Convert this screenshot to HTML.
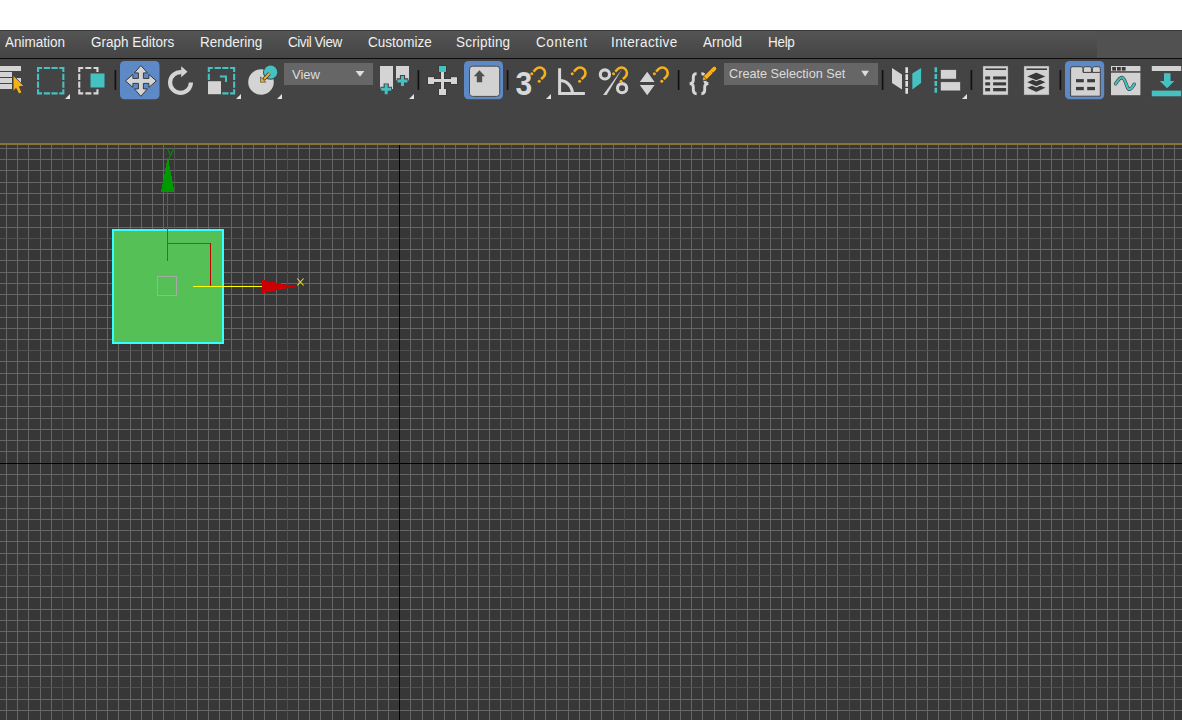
<!DOCTYPE html>
<html><head><meta charset="utf-8">
<style>
html,body{margin:0;padding:0;}
body{width:1182px;height:720px;overflow:hidden;background:#fff;position:relative;font-family:"Liberation Sans",sans-serif;}
#menubar{position:absolute;left:0;top:30px;width:1182px;height:27px;background:linear-gradient(#555 0%,#4c4c4c 50%,#454545 100%);border-top:1px solid #383838;}
#menuright{position:absolute;left:1097px;top:31px;width:85px;height:27px;background:#515151;}
#menuline{position:absolute;left:0;top:58px;width:1182px;height:1px;background:#0c0c0c;}
.mi{position:absolute;top:34px;font-size:13.5px;line-height:16px;color:#f0f0f0;white-space:nowrap;transform:scaleY(1.1);transform-origin:0 3px;}
#toolbar{position:absolute;left:0;top:59px;width:1182px;height:84px;background:#444444;}
#ybar{position:absolute;left:0;top:143px;width:1182px;height:2px;background:#8a7432;}
#vp{position:absolute;left:0;top:145px;width:1182px;height:575px;background:#373737;}
svg{position:absolute;left:0;top:0;}
.dd{position:absolute;height:22px;top:63px;background:#666666;}
.ddt{position:absolute;top:67px;font-size:13px;line-height:14px;color:#dcdcdc;white-space:nowrap;}
</style></head><body>
<div id="menubar"></div><div id="menuright"></div><div id="menuline"></div>
<div class="mi" style="left:5px">Animation</div>
<div class="mi" style="left:91px">Graph Editors</div>
<div class="mi" style="left:200px">Rendering</div>
<div class="mi" style="left:288px;letter-spacing:-0.45px">Civil View</div>
<div class="mi" style="left:368px">Customize</div>
<div class="mi" style="left:456px;letter-spacing:0.2px">Scripting</div>
<div class="mi" style="left:536px;letter-spacing:0.6px">Content</div>
<div class="mi" style="left:611px;letter-spacing:0.4px">Interactive</div>
<div class="mi" style="left:703px">Arnold</div>
<div class="mi" style="left:768px;letter-spacing:-0.3px">Help</div>
<div id="toolbar"></div>
<div id="ybar"></div>
<div id="vp"></div>
<svg width="1182" height="720" viewBox="0 0 1182 720">
<path d="M6 145h1V720h-1zM17 145h1V720h-1zM28 145h1V720h-1zM40 145h1V720h-1zM51 145h1V720h-1zM73 145h1V720h-1zM85 145h1V720h-1zM96 145h1V720h-1zM107 145h1V720h-1zM118 145h1V720h-1zM130 145h1V720h-1zM141 145h1V720h-1zM152 145h1V720h-1zM163 145h1V720h-1zM186 145h1V720h-1zM197 145h1V720h-1zM208 145h1V720h-1zM219 145h1V720h-1zM231 145h1V720h-1zM242 145h1V720h-1zM253 145h1V720h-1zM264 145h1V720h-1zM276 145h1V720h-1zM298 145h1V720h-1zM309 145h1V720h-1zM320 145h1V720h-1zM332 145h1V720h-1zM343 145h1V720h-1zM354 145h1V720h-1zM365 145h1V720h-1zM377 145h1V720h-1zM388 145h1V720h-1zM410 145h1V720h-1zM422 145h1V720h-1zM433 145h1V720h-1zM444 145h1V720h-1zM455 145h1V720h-1zM467 145h1V720h-1zM478 145h1V720h-1zM489 145h1V720h-1zM500 145h1V720h-1zM523 145h1V720h-1zM534 145h1V720h-1zM545 145h1V720h-1zM556 145h1V720h-1zM568 145h1V720h-1zM579 145h1V720h-1zM590 145h1V720h-1zM601 145h1V720h-1zM613 145h1V720h-1zM635 145h1V720h-1zM646 145h1V720h-1zM658 145h1V720h-1zM669 145h1V720h-1zM680 145h1V720h-1zM691 145h1V720h-1zM702 145h1V720h-1zM714 145h1V720h-1zM725 145h1V720h-1zM747 145h1V720h-1zM759 145h1V720h-1zM770 145h1V720h-1zM781 145h1V720h-1zM792 145h1V720h-1zM804 145h1V720h-1zM815 145h1V720h-1zM826 145h1V720h-1zM837 145h1V720h-1zM860 145h1V720h-1zM871 145h1V720h-1zM882 145h1V720h-1zM893 145h1V720h-1zM905 145h1V720h-1zM916 145h1V720h-1zM927 145h1V720h-1zM938 145h1V720h-1zM950 145h1V720h-1zM972 145h1V720h-1zM983 145h1V720h-1zM995 145h1V720h-1zM1006 145h1V720h-1zM1017 145h1V720h-1zM1028 145h1V720h-1zM1040 145h1V720h-1zM1051 145h1V720h-1zM1062 145h1V720h-1zM1084 145h1V720h-1zM1096 145h1V720h-1zM1107 145h1V720h-1zM1118 145h1V720h-1zM1129 145h1V720h-1zM1141 145h1V720h-1zM1152 145h1V720h-1zM1163 145h1V720h-1zM1174 145h1V720h-1zM0 148H1182v1H0zM0 159H1182v1H0zM0 170H1182v1H0zM0 182H1182v1H0zM0 193H1182v1H0zM0 204H1182v1H0zM0 215H1182v1H0zM0 227H1182v1H0zM0 249H1182v1H0zM0 260H1182v1H0zM0 272H1182v1H0zM0 283H1182v1H0zM0 294H1182v1H0zM0 305H1182v1H0zM0 317H1182v1H0zM0 328H1182v1H0zM0 339H1182v1H0zM0 361H1182v1H0zM0 373H1182v1H0zM0 384H1182v1H0zM0 395H1182v1H0zM0 406H1182v1H0zM0 418H1182v1H0zM0 429H1182v1H0zM0 440H1182v1H0zM0 451H1182v1H0zM0 474H1182v1H0zM0 485H1182v1H0zM0 496H1182v1H0zM0 508H1182v1H0zM0 519H1182v1H0zM0 530H1182v1H0zM0 541H1182v1H0zM0 553H1182v1H0zM0 564H1182v1H0zM0 586H1182v1H0zM0 597H1182v1H0zM0 609H1182v1H0zM0 620H1182v1H0zM0 631H1182v1H0zM0 642H1182v1H0zM0 654H1182v1H0zM0 665H1182v1H0zM0 676H1182v1H0zM0 699H1182v1H0zM0 710H1182v1H0z" fill="#666666" shape-rendering="crispEdges"/>
<path d="M62 145h1V720h-1zM174 145h1V720h-1zM287 145h1V720h-1zM511 145h1V720h-1zM624 145h1V720h-1zM736 145h1V720h-1zM849 145h1V720h-1zM961 145h1V720h-1zM1073 145h1V720h-1zM0 238H1182v1H0zM0 350H1182v1H0zM0 575H1182v1H0zM0 687H1182v1H0z" fill="#505050" shape-rendering="crispEdges"/>
<rect x="399" y="145" width="1" height="575" fill="#000"/>
<rect x="0" y="463" width="1182" height="1" fill="#000"/>
</svg>
<div class="dd" style="left:284px;width:89px"></div>
<div class="ddt" style="left:292px;top:68px;transform:scaleY(1.05);transform-origin:0 2px">View</div>
<div class="dd" style="left:724px;width:154px"></div>
<div class="ddt" style="left:729px;font-size:12.7px">Create Selection Set</div>
<svg id="gz" width="1182" height="720" viewBox="0 0 1182 720">
<rect x="112" y="229" width="112" height="115" fill="#55c055"/>
<rect x="113" y="230" width="110" height="113" fill="none" stroke="#33ffff" stroke-width="2"/>
<rect x="157.5" y="276.5" width="19" height="19" fill="none" stroke="#a8a8a8" stroke-width="1"/>
<g shape-rendering="crispEdges">
<rect x="167" y="191" width="1" height="70" fill="#009900"/>
<rect x="167" y="243" width="44" height="1" fill="#009900"/>
<rect x="210" y="243" width="1" height="43" fill="#bb0000"/>
<rect x="193" y="286" width="70" height="1" fill="#ffff00"/>
</g>
<path d="M161 192H174.5L167.8 156.5Z" fill="#009900" shape-rendering="crispEdges"/>
<path d="M262 280V293L296.5 286.5Z" fill="#cc0000" shape-rendering="crispEdges"/>
<path d="M167.2 148L170.8 156M174 148L168.6 159.5" stroke="#009900" stroke-width="1" fill="none"/>
<path d="M297.2 278.5L303.6 285.5M303.6 278.5L297.2 285.5" stroke="#e8e020" stroke-width="1.1" fill="none"/>
</svg>

<svg id="tb" width="1182" height="145" viewBox="0 0 1182 145">
<g fill="#d4d4d4">
<!-- select by name -->
<rect x="0" y="66" width="21" height="5"/>
<rect x="0" y="72" width="12" height="5"/>
<rect x="0" y="78" width="12" height="5"/>
<rect x="17" y="78" width="4" height="5"/>
<rect x="0" y="84" width="12" height="5"/>
</g>
<path d="M13.1 75.3V91.3L16.1 88.4L18.8 94L21.9 92.6L19.4 86.7L24 86.1Z" fill="#f6b11a" stroke="#3a3a3a" stroke-width="0.8" stroke-linejoin="round"/>
<!-- rect select -->
<path d="M38.05 72.00V68.05H42.00M59.30 68.05H63.35V72.00M63.35 89.30V93.35H59.30M42.00 93.35H38.05V89.30M43.80 68.05H50.10M43.80 93.35H50.10M51.40 68.05H57.70M51.40 93.35H57.70M38.05 73.80V80.10M63.35 73.80V80.10M38.05 81.40V87.70M63.35 81.40V87.70" fill="none" stroke="#45c1c1" stroke-width="2.1" stroke-linejoin="miter"/>
<path d="M65 99H70V94Z" fill="#e2e2e2"/>
<!-- window crossing -->
<path d="M79.25 72.00V68.05H83.20M93.50 68.05H97.45V72.00M97.45 89.30V93.35H93.50M83.20 93.35H79.25V89.30M85.40 68.05H91.30M85.40 93.35H91.30M79.25 73.80V80.10M97.45 73.80V80.10M79.25 81.40V87.70M97.45 81.40V87.70" fill="none" stroke="#d8d8d8" stroke-width="2.1" stroke-linejoin="miter"/>
<rect x="89.4" y="72.5" width="16" height="16" fill="#444"/>
<rect x="90.5" y="73.5" width="14" height="14" fill="#45c1c1"/>
<!-- separators -->
<g fill="#111">
<rect x="114.6" y="70" width="1.6" height="20"/>
<rect x="417.6" y="70" width="1.6" height="20"/>
<rect x="506.8" y="70" width="1.6" height="20"/>
<rect x="677.8" y="70" width="1.6" height="20"/>
<rect x="881.8" y="70" width="1.6" height="20"/>
<rect x="970.6" y="70" width="1.6" height="20"/>
<rect x="1059.6" y="70" width="1.6" height="20"/>
</g>
<!-- blue buttons -->
<g fill="#5d8ac6">
<rect x="120" y="61" width="39.5" height="38.2" rx="4.5"/>
<rect x="464" y="61" width="39" height="38.2" rx="4.5"/>
<rect x="1065" y="61" width="39.2" height="38.2" rx="4.5"/>
</g>
<!-- move -->
<path d="M140.90 65.50L147.40 72.90L143.40 72.90L143.40 78.40L148.90 78.40L148.90 74.40L156.30 80.90L148.90 87.40L148.90 83.40L143.40 83.40L143.40 88.90L147.40 88.90L140.90 96.30L134.40 88.90L138.40 88.90L138.40 83.40L132.90 83.40L132.90 87.40L125.50 80.90L132.90 74.40L132.90 78.40L138.40 78.40L138.40 72.90L134.40 72.90Z" fill="#d4d4d4" stroke="#383838" stroke-width="1" stroke-linejoin="miter"/>
<!-- rotate -->
<path d="M190.9 82.5A10.4 10.4 0 1 1 181.5 72.1" fill="none" stroke="#d4d4d4" stroke-width="4.2"/>
<path d="M181.2 66.2L187.5 71.8L181.2 77.2Z" fill="#d4d4d4"/>
<!-- scale -->
<path d="M208.85 72.00V68.05H212.80M230.10 68.05H234.15V72.00M234.15 89.30V93.35H230.10M212.80 93.35H208.85V89.30M214.60 68.05H220.90M214.60 93.35H220.90M222.20 68.05H228.50M222.20 93.35H228.50M208.85 73.80V80.10M234.15 73.80V80.10M208.85 81.40V87.70M234.15 81.40V87.70" fill="none" stroke="#45c1c1" stroke-width="2.1" stroke-linejoin="miter"/>
<rect x="207" y="80" width="15" height="15" fill="#444"/>
<rect x="208" y="81.2" width="13" height="13" fill="#d4d4d4"/>
<path d="M219.8 76.4H226V82" fill="none" stroke="#45c1c1" stroke-width="2"/>
<path d="M236 99H241V94Z" fill="#e2e2e2"/>
<!-- pivot -->
<circle cx="261" cy="82" r="12.8" fill="#d4d4d4"/>
<circle cx="270.6" cy="72.2" r="7.6" fill="#444"/>
<circle cx="270.6" cy="72.2" r="6.6" fill="#45c1c1"/>
<path d="M269.5 73.5L263.5 79.5" stroke="#3a3a3a" stroke-width="3.6"/>
<path d="M269.5 73.5L264 79" stroke="#f6b11a" stroke-width="2"/>
<path d="M260.5 82.2V76.8L265.8 82.2Z" fill="#f6b11a" stroke="#3a3a3a" stroke-width="0.6"/>
<path d="M277 99H282V94Z" fill="#e2e2e2"/>
<!-- view dropdown triangle -->
<path d="M355.6 71H364.4L360 76.8Z" fill="#dedede"/>
<!-- named selection -->
<path d="M380 66H393V89H380Z" fill="#d4d4d4"/>
<path d="M396 66H409V80.4H396Z" fill="#d4d4d4"/>
<path d="M386.2 83.5V95.2M380.4 89.3H392" stroke="#444" stroke-width="5.2"/>
<path d="M386.2 84.3V94.3M381.2 89.3H391.2" stroke="#45c1c1" stroke-width="3"/>
<path d="M402.5 75.1V86.8M396.7 80.9H408.3" stroke="#444" stroke-width="5.2"/>
<path d="M402.5 75.9V85.9M397.5 80.9H407.5" stroke="#45c1c1" stroke-width="3"/>
<path d="M409 99H414V94Z" fill="#e2e2e2"/>
<!-- placement -->
<g fill="#d6d6d6" stroke="#353535" stroke-width="1.2">
<rect x="441" y="72" width="3" height="18"/><rect x="434" y="79" width="17" height="3"/>
<rect x="428" y="77.2" width="6" height="6.8"/><rect x="451" y="77.2" width="6" height="6.8"/><rect x="439" y="89" width="7" height="6"/>
<rect x="439" y="66" width="7" height="6" fill="#45c1c1"/>
</g>
<g fill="#d6d6d6">
<rect x="441" y="72" width="3" height="18"/><rect x="434" y="79" width="17" height="3"/>
<rect x="428" y="77.2" width="6" height="6.8"/><rect x="451" y="77.2" width="6" height="6.8"/><rect x="439" y="89" width="7" height="6"/>
<rect x="439" y="66" width="7" height="6" fill="#45c1c1"/>
</g>
<!-- select manipulate -->
<rect x="469.5" y="66.2" width="30.2" height="30.2" rx="3" fill="#d2d2d2" stroke="#4c4c4c" stroke-width="1"/>
<path d="M473.8 76.3L479.4 70.2L485 76.3H482.2V82.2H476.8V76.3Z" fill="#505050"/>
<!-- snaps -->
<text transform="translate(515.6 95.2) scale(1 1.11)" font-family="Liberation Sans" font-weight="bold" font-size="30" fill="#d8d8d8">3</text>
<g fill="none" stroke="#f6b11a" stroke-width="2.6">
<path d="M533.5 71.55L535.88 69.18A5.4 5.4 0 0 1 543.52 76.82L541.15 79.2"/><circle cx="531.8" cy="73.7" r="1.5" fill="#f6b11a" stroke="none"/><circle cx="539.2" cy="81.2" r="1.5" fill="#f6b11a" stroke="none"/>
</g>
<path d="M546 99H551V94Z" fill="#e2e2e2"/>
<!-- angle snap -->
<path d="M559.6 68.2V93.4H584.9" fill="none" stroke="#d6d6d6" stroke-width="3"/>
<path d="M559.6 80.6A12.8 12.8 0 0 1 572.4 93.4" fill="none" stroke="#d6d6d6" stroke-width="3"/>
<g transform="translate(40.4 0)" fill="none" stroke="#f6b11a" stroke-width="2.6"><path d="M533.5 71.55L535.88 69.18A5.4 5.4 0 0 1 543.52 76.82L541.15 79.2"/><circle cx="531.8" cy="73.7" r="1.5" fill="#f6b11a" stroke="none"/><circle cx="539.2" cy="81.2" r="1.5" fill="#f6b11a" stroke="none"/></g>
<!-- percent -->
<circle cx="604.9" cy="74.45" r="4.6" fill="none" stroke="#d4d4d4" stroke-width="3.1"/>
<circle cx="622.1" cy="88.2" r="4.6" fill="none" stroke="#d4d4d4" stroke-width="3.1"/>
<path d="M603.1 94.9H606.6L622.2 68.8Z" fill="#d4d4d4"/>
<g transform="translate(81.8 0)" fill="none" stroke="#f6b11a" stroke-width="2.6"><path d="M533.5 71.55L535.88 69.18A5.4 5.4 0 0 1 543.52 76.82L541.15 79.2"/><circle cx="531.8" cy="73.7" r="1.5" fill="#f6b11a" stroke="none"/><circle cx="539.2" cy="81.2" r="1.5" fill="#f6b11a" stroke="none"/></g>
<!-- spinner -->
<path d="M639.8 82H654.6L647.2 71.7Z" fill="#d4d4d4"/>
<path d="M639.8 85H654.6L647.2 95.3Z" fill="#d4d4d4"/>
<g transform="translate(122.6 0)" fill="none" stroke="#f6b11a" stroke-width="2.6"><path d="M533.5 71.55L535.88 69.18A5.4 5.4 0 0 1 543.52 76.82L541.15 79.2"/><circle cx="531.8" cy="73.7" r="1.5" fill="#f6b11a" stroke="none"/><circle cx="539.2" cy="81.2" r="1.5" fill="#f6b11a" stroke="none"/></g>
<!-- braces -->
<g fill="none" stroke="#d6d6d6" stroke-width="2.9">
<path d="M696.6 73.6C694 73.6 693.3 75 693.3 77.2V80.3C693.3 82.3 692.2 83.6 689.6 83.6C692.2 83.6 693.3 85 693.3 87V90.1C693.3 92.3 694 93.7 696.6 93.7"/>
<path d="M701.4 73.6C704 73.6 704.7 75 704.7 77.2V80.3C704.7 82.3 705.8 83.6 708.4 83.6C705.8 83.6 704.7 85 704.7 87V90.1C704.7 92.3 704 93.7 701.4 93.7"/>
</g>
<path d="M705 78L714.4 68.6" stroke="#3a3a3a" stroke-width="5.4" stroke-linecap="round"/>
<path d="M705 78L714.4 68.6" stroke="#f6b11a" stroke-width="4" stroke-linecap="round"/>
<path d="M702.2 80.8L703.3 76.2L706.8 79.6Z" fill="#f6b11a" stroke="#3a3a3a" stroke-width="0.7" stroke-linejoin="round"/>
<path d="M711.8 71.6L713.4 73.2" stroke="#7a5a20" stroke-width="0.8"/>
<!-- create sel set triangle -->
<path d="M861.3 70.8H868.9L865.1 76.6Z" fill="#dedede"/>
<!-- mirror -->
<path d="M892 68L902 74.5V89.5L892 83Z" fill="#d4d4d4"/>
<path d="M906.7 67.3V93.7" stroke="#e0e0e0" stroke-width="2.6" stroke-dasharray="5.8 1.067"/>
<path d="M912.3 73.5L921.1 68V83L912.3 89.5Z" fill="#45c1c1"/>
<!-- align -->
<path d="M935.8 67.3V93.7" stroke="#45c1c1" stroke-width="2.6" stroke-dasharray="5 1.8"/>
<rect x="940.4" y="69.6" width="16" height="9.5" fill="#d4d4d4" stroke="#3c3c3c" stroke-width="0.6"/>
<rect x="940.4" y="81.8" width="20.1" height="9.1" fill="#d4d4d4" stroke="#3c3c3c" stroke-width="0.6"/>
<path d="M962 99H967V94Z" fill="#e2e2e2"/>
<!-- scene explorer -->
<rect x="982.8" y="65.9" width="25.4" height="29.2" fill="#d2d2d2" stroke="#3c3c3c" stroke-width="0.6"/>
<g fill="#3a3a3a">
<rect x="985.4" y="68.4" width="20.7" height="1.6"/>
<rect x="985.2" y="76.4" width="4.9" height="3.1"/><rect x="993.1" y="76.4" width="13" height="3.1"/>
<rect x="985.2" y="82.3" width="4.9" height="3.1"/><rect x="993.1" y="82.3" width="13" height="3.1"/>
<rect x="985.2" y="88" width="4.9" height="3.3"/><rect x="993.1" y="88" width="13" height="3.3"/>
</g>
<!-- layers -->
<rect x="1023.8" y="65.9" width="25.4" height="29.2" fill="#d2d2d2" stroke="#3c3c3c" stroke-width="0.6"/>
<rect x="1026.4" y="68.4" width="20.7" height="1.6" fill="#3a3a3a"/>
<g fill="#383838" stroke="#d2d2d2" stroke-width="1.1"><path d="M1036.3 83.2L1046.7 87.8L1036.3 92.39999999999999L1025.8999999999999 87.8Z"/><path d="M1036.3 77.60000000000001L1046.7 82.2L1036.3 86.8L1025.8999999999999 82.2Z"/><path d="M1036.3 72.10000000000001L1046.7 76.4L1036.3 80.7L1025.8999999999999 76.4Z"/></g>
<!-- table/ribbon button -->
<g fill="#d2d2d2" stroke="#454545" stroke-width="1">
<path d="M1070.6 96.2V68.7Q1070.6 66.7 1072.6 66.7H1081Q1083 66.7 1083 68.7V72.4H1100.3V96.2Z"/>
<path d="M1083.4 72.4V68.7Q1083.4 66.7 1085.4 66.7H1089.4Q1091.4 66.7 1091.4 68.7V72.4Z"/>
<path d="M1092.4 72.4V68.7Q1092.4 66.7 1094.4 66.7H1098.3Q1100.3 66.7 1100.3 68.7V72.4Z"/>
</g>
<g fill="#3c3c3c">
<rect x="1076" y="79.1" width="7.8" height="3.2"/><rect x="1087.2" y="79.1" width="7.8" height="3.2"/>
<rect x="1076" y="86.9" width="7.8" height="3.3"/><rect x="1087.2" y="86.9" width="7.8" height="3.3"/>
</g>
<!-- curve editor -->
<rect x="1111" y="66" width="29.4" height="5.2" fill="#d2d2d2"/>
<rect x="1111" y="72.7" width="29.4" height="22.5" fill="#d2d2d2"/>
<g fill="#3a3a3a">
<rect x="1112.2" y="67" width="3.8" height="3.6"/><rect x="1117" y="67" width="3.8" height="3.6"/><rect x="1121.8" y="67" width="3.8" height="3.6"/>
</g>
<path d="M1115.6 83.8C1117.5 81 1119.8 77.3 1122 77.5C1124.5 77.8 1126 84 1127.3 87C1128 88.7 1129 89.6 1130 89.2C1131.8 88.5 1133 86 1134.2 84.2" fill="none" stroke="#3a3a3a" stroke-width="3.4" stroke-linecap="round"/>
<path d="M1115.6 83.8C1117.5 81 1119.8 77.3 1122 77.5C1124.5 77.8 1126 84 1127.3 87C1128 88.7 1129 89.6 1130 89.2C1131.8 88.5 1133 86 1134.2 84.2" fill="none" stroke="#45c1c1" stroke-width="2.2" stroke-linecap="round"/>
<!-- import -->
<rect x="1151.8" y="66" width="29.4" height="5" fill="#d2d2d2"/>
<rect x="1164" y="73.2" width="6.5" height="8.5" fill="#45c1c1"/>
<path d="M1159.8 81H1174.4L1167.1 88.3Z" fill="#45c1c1"/>
<rect x="1151.8" y="90.6" width="29.4" height="5.7" fill="#45c1c1"/>
</svg>

</body></html>
